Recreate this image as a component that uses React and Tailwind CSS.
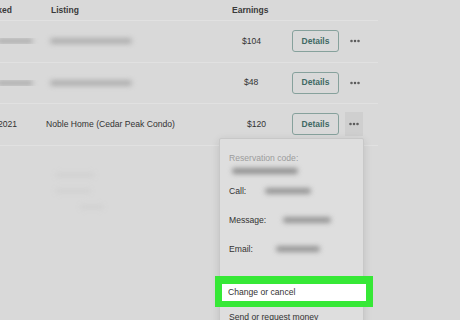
import { MoreHorizontal } from 'lucide-react';

const rows = [
  { date: null, listing: null, amount: '$104', amountPad: 'pl-[10px]' },
  { date: null, listing: null, amount: '$48', amountPad: 'pl-[12px]' },
  { date: 'Mar 12, 2021', listing: 'Noble Home (Cedar Peak Condo)', amount: '$120', amountPad: 'pl-[15px]', open: true },
];

// blurred placeholder for hidden guest data
const Blur = ({ w, tone = 'bg-[#b0b0b0]' }) => (
  <div className={`h-[6px] rounded-full blur-[2.5px] ${tone}`} style={{ width: w }} />
);

const Dots = ({ active }) => (
  <div
    className={`flex h-[24px] w-[18px] items-center justify-center ${
      active ? 'bg-[#cfcfcf]' : ''
    }`}
  >
    <MoreHorizontal size={12} strokeWidth={3} className="text-[#555]" />
  </div>
);

export default function App() {
  return (
    <div
      className="relative h-[320px] w-[460px] overflow-hidden bg-[#d9d9d9] text-[#333]"
      style={{ fontFamily: '"Liberation Sans", Arial, sans-serif' }}
    >
      {/* header */}
      <div className="flex h-[21px] items-center border-b border-[#e1e1e1] w-[378px] text-[8.5px] font-bold text-[#3a3a3a]">
        <div className="flex w-[46px] justify-end overflow-hidden whitespace-nowrap pr-[34px]">Booked</div>
        <div className="w-[186px] pl-[5px]">Listing</div>
        <div className="w-[60px]">Earnings</div>
      </div>

      {/* rows */}
      {rows.map((r, i) => (
        <div
          key={i}
          className="flex h-[41.5px] w-[378px] items-center border-b border-[#e1e1e1] text-[8.6px]"
        >
          <div className="flex w-[46px] justify-end overflow-hidden whitespace-nowrap pr-[29px]">
            {r.date ? r.date : <div className="-ml-[4px] mr-[-16px]"><Blur w={36} /></div>}
          </div>
          <div className="w-[186px] whitespace-nowrap">
            {r.listing ? r.listing : <div className="pl-[4px]"><Blur w={82} /></div>}
          </div>
          <div className={`w-[60px] ${r.amountPad}`}>{r.amount}</div>
          <button className="flex h-[22px] w-[47px] items-center justify-center rounded-[3px] border-[1.5px] border-[#86a19c] text-[8.5px] font-bold text-[#3f6964]">
            Details
          </button>
          <div className={r.open ? 'ml-[6px]' : 'ml-[7px]'}>
            <Dots active={r.open} />
          </div>
        </div>
      ))}

      {/* faint background content under the menu */}
      <div className="flex flex-col gap-[10px] pl-[55px] pt-[26px] opacity-50">
        <Blur w={40} tone="bg-[#cdcdcd]" />
        <Blur w={36} tone="bg-[#cdcdcd]" />
        <div className="pl-[25px]"><Blur w={24} tone="bg-[#cdcdcd]" /></div>
      </div>

      {/* dropdown menu */}
      <div className="absolute left-[219px] top-[138px] h-[200px] w-[145px] rounded-[2px] border border-[#c8c8c8] bg-[#dedede] shadow-[0_2px_8px_rgba(0,0,0,0.12)]">
        <div className="flex flex-col px-[9px] pt-[13px] text-[8.6px]">
          <div className="text-[#9c9c9c]">Reservation code:</div>
          <div className="mt-[3px] pl-[3px]"><Blur w={66} tone="bg-[#8f8f8f]" /></div>

          <div className="mt-[11px] flex items-center gap-[19px]">
            <span>Call:</span>
            <Blur w={46} tone="bg-[#959595]" />
          </div>
          <div className="mt-[16px] flex items-center gap-[17px]">
            <span>Message:</span>
            <Blur w={48} tone="bg-[#959595]" />
          </div>
          <div className="mt-[16px] flex items-center gap-[23px]">
            <span>Email:</span>
            <Blur w={44} tone="bg-[#959595]" />
          </div>

          {/* highlighted option */}
          <div className="-ml-[14px] -mr-[19px] mt-[20px] border-[7px] border-t-[8px] border-b-[6px] border-[#36e836]">
            <div className="flex h-[17px] items-center bg-white pl-[6px] text-[#333]">Change or cancel</div>
          </div>

          <div className="mt-[4px]">Send or request money</div>
        </div>
      </div>
    </div>
  );
}
